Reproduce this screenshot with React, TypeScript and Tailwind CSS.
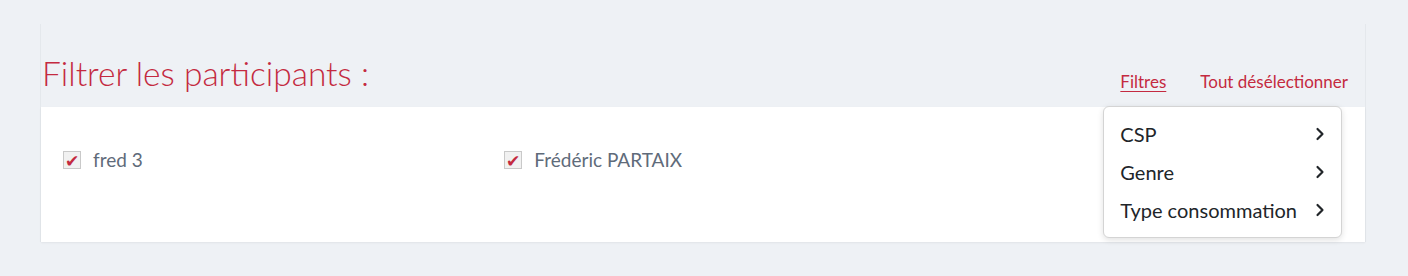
import { ChevronRight } from "lucide-react";

const participants = ["fred 3", "Frédéric PARTAIX"];
const filters = ["CSP", "Genre", "Type consommation"];

function Check() {
  return (
    <span className="flex h-[18px] w-[18px] items-center justify-center border border-[#c9c9c9] bg-[#f1f1f1] pt-[1px] text-[17px] leading-none text-[#c42a40]">
      ✔
    </span>
  );
}

export default function App() {
  return (
    <div className="min-h-[276px] bg-[#eef1f5] pt-6 font-['Lato',sans-serif]">
      <div className="mx-[40px] w-[1326px] border-x border-[#e4e8ec]">
        <div className="flex h-[83px] items-end justify-between pb-[17px] pl-[1px] pr-[17px]">
          <h2 className="text-[33.5px] font-light leading-none text-[#c42a40]">Filtrer les participants :</h2>
          <div className="relative -mb-[4px] flex items-center gap-[34px] text-[17px] text-[#c42a40]">
            <a href="#" className="underline decoration-1 underline-offset-[3px]">Filtres</a>
            <a href="#">Tout désélectionner</a>
            <div className="absolute left-[-17px] top-[37px] z-10 w-[239px] rounded-md border border-[#d4d4d4] bg-white py-[8px] shadow-[0_2px_6px_rgba(0,0,0,0.12)]">
              {filters.map((f) => (
                <div key={f} className="flex h-[38px] items-center justify-between pl-[16px] pr-[11px] text-[20px] text-[#212529]">
                  <span>{f}</span>
                  <ChevronRight size={20} strokeWidth={2.6} />
                </div>
              ))}
            </div>
          </div>
        </div>
        <div className="grid h-[135px] grid-cols-3 bg-white pt-[44px] shadow-[0_1px_2px_rgba(0,0,0,0.06)]">
          {participants.map((p) => (
            <label key={p} className="flex h-[18px] items-center gap-[12px] pl-[22px] text-[19px] text-[#5f6b7a]">
              <Check />
              <span>{p}</span>
            </label>
          ))}
        </div>
      </div>
    </div>
  );
}
